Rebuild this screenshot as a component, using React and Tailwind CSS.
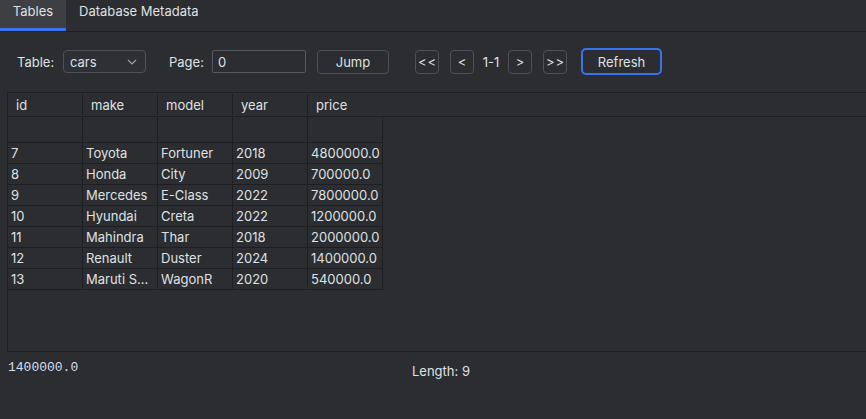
import React from "react";

const rows = [
  ["", "", "", "", ""],
  ["7", "Toyota", "Fortuner", "2018", "4800000.0"],
  ["8", "Honda", "City", "2009", "700000.0"],
  ["9", "Mercedes", "E-Class", "2022", "7800000.0"],
  ["10", "Hyundai", "Creta", "2022", "1200000.0"],
  ["11", "Mahindra", "Thar", "2018", "2000000.0"],
  ["12", "Renault", "Duster", "2024", "1400000.0"],
  ["13", "Maruti S...", "WagonR", "2020", "540000.0"],
];

const headers = ["id", "make", "model", "year", "price"];

function Btn({ children, className = "" }) {
  return (
    <div
      className={
        "h-[24px] flex items-center justify-center border border-[#4e5157] rounded-[4px] bg-[#2b2d30] " +
        className
      }
    >
      {children}
    </div>
  );
}

export default function App() {
  return (
    <div
      className="w-[866px] h-[419px] bg-[#2b2d30] overflow-hidden text-[13px] leading-[16px] text-[#dfe1e5]"
      style={{ fontFamily: "Inter, 'Noto Sans', sans-serif" }}
    >
      {/* Tab bar */}
      <div className="h-[32px] border-b border-[#1e1f22] flex">
        <div className="w-[66px] h-[31px] bg-[#3d3f43] border-b-[3px] border-[#3574f0] flex justify-center pt-[3px]">
          Tables
        </div>
        <div className="h-[31px] pl-[13px] pt-[3px]">Database Metadata</div>
      </div>

      {/* Toolbar */}
      <div className="mt-[16px] h-[27px] flex items-center">
        <div className="ml-[17px] w-[46px]">Table:</div>
        <div className="w-[83px] h-[23px] border border-[#4e5157] rounded-[4px] bg-[#2e3034] flex items-center pl-[6px] pr-[8px] justify-between">
          <span>cars</span>
          <svg width="10" height="6" viewBox="0 0 10 6" fill="none">
            <path d="M1 1l4 4 4-4" stroke="#9da0a8" strokeWidth="1.2" />
          </svg>
        </div>
        <div className="ml-[23px] w-[43px]">Page:</div>
        <div className="w-[94px] h-[23px] border border-[#55585e] rounded-[2px] bg-[#2b2d30] flex items-center pl-[5px]">
          0
        </div>
        <Btn className="ml-[11px] w-[72px]">Jump</Btn>
        <Btn className="ml-[26px] w-[24px] tracking-[1px] pl-[1px]">&lt;&lt;</Btn>
        <Btn className="ml-[11px] w-[24px]">&lt;</Btn>
        <div className="w-[34px] text-center">1-1</div>
        <Btn className="w-[24px]">&gt;</Btn>
        <Btn className="ml-[11px] w-[24px] tracking-[1px] pl-[1px]">&gt;&gt;</Btn>
        <div className="ml-[14px] w-[81px] h-[27px] border-2 border-[#3574f0] rounded-[5px] flex items-center justify-center">
          Refresh
        </div>
      </div>

      {/* Table scroll pane */}
      <div className="mt-[17px] ml-[7px] h-[260px] border border-r-0 border-[#1e1f22]">
        <div className="h-[24px] border-b border-[#1e1f22] flex">
          {headers.map((h, i) => (
            <div key={h} className="flex items-center">
              <div className="w-[74px] pl-[8px]">{h}</div>
              {i < headers.length - 1 && (
                <div className="w-px h-[21px] bg-[#1e1f22]" />
              )}
            </div>
          ))}
        </div>
        <div className="flex flex-col">
          {rows.map((r, ri) => (
            <div key={ri} className="flex">
              {r.map((c, ci) => (
                <div
                  key={ci}
                  className={
                    "w-[75px] border-r border-b border-[#1e1f22] pl-[3px] flex items-center whitespace-nowrap overflow-hidden " +
                    (ri === 0 ? "h-[26px]" : "h-[21px]")
                  }
                >
                  {c}
                </div>
              ))}
            </div>
          ))}
        </div>
      </div>

      {/* Bottom */}
      <div className="flex">
        <div
          className="ml-[8px] w-[404px] mt-[9px] text-[13px] leading-[13px] text-[#d4ddee]"
          style={{ fontFamily: "'Liberation Mono', monospace" }}
        >
          1400000.0
        </div>
        <div className="mt-[11px]">Length: 9</div>
      </div>
    </div>
  );
}
